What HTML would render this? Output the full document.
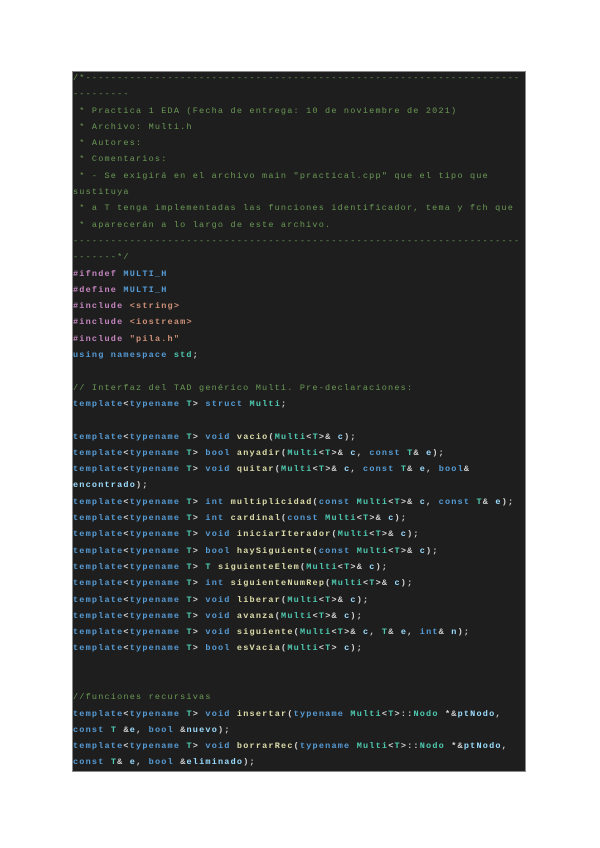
<!DOCTYPE html>
<html><head><meta charset="utf-8"><style>
html,body{margin:0;padding:0;background:#fff;width:600px;height:848px;overflow:hidden}
.box{position:absolute;left:72px;top:71px;width:454px;height:701px;background:#1e1e1e;border:1px solid #8a8a8a;box-sizing:border-box}
pre{position:absolute;left:73px;top:70px;margin:0;font-family:"Liberation Mono",monospace;font-size:8.5px;letter-spacing:1.2px;line-height:16.29px;color:#d4d4d4;font-weight:bold;white-space:pre}
.c{color:#6a9955;font-weight:normal}.k{color:#569cd6}.t{color:#4ec9b0}.f{color:#dcdcaa}.p{color:#c586c0}.s{color:#ce9178}.v{color:#9cdcfe}.m{color:#569cd6}
</style></head><body>
<div class="box"></div>
<pre><span class="c">/*---------------------------------------------------------------------
---------
 * Practica 1 EDA (Fecha de entrega: 10 de noviembre de 2021)
 * Archivo: Multi.h
 * Autores:
 * Comentarios:
 * - Se exigirá en el archivo main "practical.cpp" que el tipo que
sustituya
 * a T tenga implementadas las funciones identificador, tema y fch que
 * aparecerán a lo largo de este archivo.
-----------------------------------------------------------------------
-------*/</span>
<span class="p">#ifndef</span> <span class="k">MULTI_H</span>
<span class="p">#define</span> <span class="k">MULTI_H</span>
<span class="p">#include</span> <span class="s">&lt;string&gt;</span>
<span class="p">#include</span> <span class="s">&lt;iostream&gt;</span>
<span class="p">#include</span> <span class="s">"pila.h"</span>
<span class="k">using namespace</span> <span class="t">std</span>;

<span class="c">// Interfaz del TAD genérico Multi. Pre-declaraciones:</span>
<span class="k">template</span>&lt;<span class="k">typename</span> <span class="t">T</span>&gt; <span class="k">struct</span> <span class="t">Multi</span>;

<span class="k">template</span>&lt;<span class="k">typename</span> <span class="t">T</span>&gt; <span class="k">void</span> <span class="f">vacio</span>(<span class="t">Multi</span>&lt;<span class="t">T</span>&gt;&amp; <span class="v">c</span>);
<span class="k">template</span>&lt;<span class="k">typename</span> <span class="t">T</span>&gt; <span class="k">bool</span> <span class="f">anyadir</span>(<span class="t">Multi</span>&lt;<span class="t">T</span>&gt;&amp; <span class="v">c</span>, <span class="k">const</span> <span class="t">T</span>&amp; <span class="v">e</span>);
<span class="k">template</span>&lt;<span class="k">typename</span> <span class="t">T</span>&gt; <span class="k">void</span> <span class="f">quitar</span>(<span class="t">Multi</span>&lt;<span class="t">T</span>&gt;&amp; <span class="v">c</span>, <span class="k">const</span> <span class="t">T</span>&amp; <span class="v">e</span>, <span class="k">bool</span>&amp;
<span class="v">encontrado</span>);
<span class="k">template</span>&lt;<span class="k">typename</span> <span class="t">T</span>&gt; <span class="k">int</span> <span class="f">multiplicidad</span>(<span class="k">const</span> <span class="t">Multi</span>&lt;<span class="t">T</span>&gt;&amp; <span class="v">c</span>, <span class="k">const</span> <span class="t">T</span>&amp; <span class="v">e</span>);
<span class="k">template</span>&lt;<span class="k">typename</span> <span class="t">T</span>&gt; <span class="k">int</span> <span class="f">cardinal</span>(<span class="k">const</span> <span class="t">Multi</span>&lt;<span class="t">T</span>&gt;&amp; <span class="v">c</span>);
<span class="k">template</span>&lt;<span class="k">typename</span> <span class="t">T</span>&gt; <span class="k">void</span> <span class="f">iniciarIterador</span>(<span class="t">Multi</span>&lt;<span class="t">T</span>&gt;&amp; <span class="v">c</span>);
<span class="k">template</span>&lt;<span class="k">typename</span> <span class="t">T</span>&gt; <span class="k">bool</span> <span class="f">haySiguiente</span>(<span class="k">const</span> <span class="t">Multi</span>&lt;<span class="t">T</span>&gt;&amp; <span class="v">c</span>);
<span class="k">template</span>&lt;<span class="k">typename</span> <span class="t">T</span>&gt; <span class="t">T</span> <span class="f">siguienteElem</span>(<span class="t">Multi</span>&lt;<span class="t">T</span>&gt;&amp; <span class="v">c</span>);
<span class="k">template</span>&lt;<span class="k">typename</span> <span class="t">T</span>&gt; <span class="k">int</span> <span class="f">siguienteNumRep</span>(<span class="t">Multi</span>&lt;<span class="t">T</span>&gt;&amp; <span class="v">c</span>);
<span class="k">template</span>&lt;<span class="k">typename</span> <span class="t">T</span>&gt; <span class="k">void</span> <span class="f">liberar</span>(<span class="t">Multi</span>&lt;<span class="t">T</span>&gt;&amp; <span class="v">c</span>);
<span class="k">template</span>&lt;<span class="k">typename</span> <span class="t">T</span>&gt; <span class="k">void</span> <span class="f">avanza</span>(<span class="t">Multi</span>&lt;<span class="t">T</span>&gt;&amp; <span class="v">c</span>);
<span class="k">template</span>&lt;<span class="k">typename</span> <span class="t">T</span>&gt; <span class="k">void</span> <span class="f">siguiente</span>(<span class="t">Multi</span>&lt;<span class="t">T</span>&gt;&amp; <span class="v">c</span>, <span class="t">T</span>&amp; <span class="v">e</span>, <span class="k">int</span>&amp; <span class="v">n</span>);
<span class="k">template</span>&lt;<span class="k">typename</span> <span class="t">T</span>&gt; <span class="k">bool</span> <span class="f">esVacia</span>(<span class="t">Multi</span>&lt;<span class="t">T</span>&gt; <span class="v">c</span>);


<span class="c">//funciones recursivas</span>
<span class="k">template</span>&lt;<span class="k">typename</span> <span class="t">T</span>&gt; <span class="k">void</span> <span class="f">insertar</span>(<span class="k">typename</span> <span class="t">Multi</span>&lt;<span class="t">T</span>&gt;::<span class="t">Nodo</span> *&amp;<span class="v">ptNodo</span>,
<span class="k">const</span> <span class="t">T</span> &amp;<span class="v">e</span>, <span class="k">bool</span> &amp;<span class="v">nuevo</span>);
<span class="k">template</span>&lt;<span class="k">typename</span> <span class="t">T</span>&gt; <span class="k">void</span> <span class="f">borrarRec</span>(<span class="k">typename</span> <span class="t">Multi</span>&lt;<span class="t">T</span>&gt;::<span class="t">Nodo</span> *&amp;<span class="v">ptNodo</span>,
<span class="k">const</span> <span class="t">T</span>&amp; <span class="v">e</span>, <span class="k">bool</span> &amp;<span class="v">eliminado</span>);</pre>
</body></html>
